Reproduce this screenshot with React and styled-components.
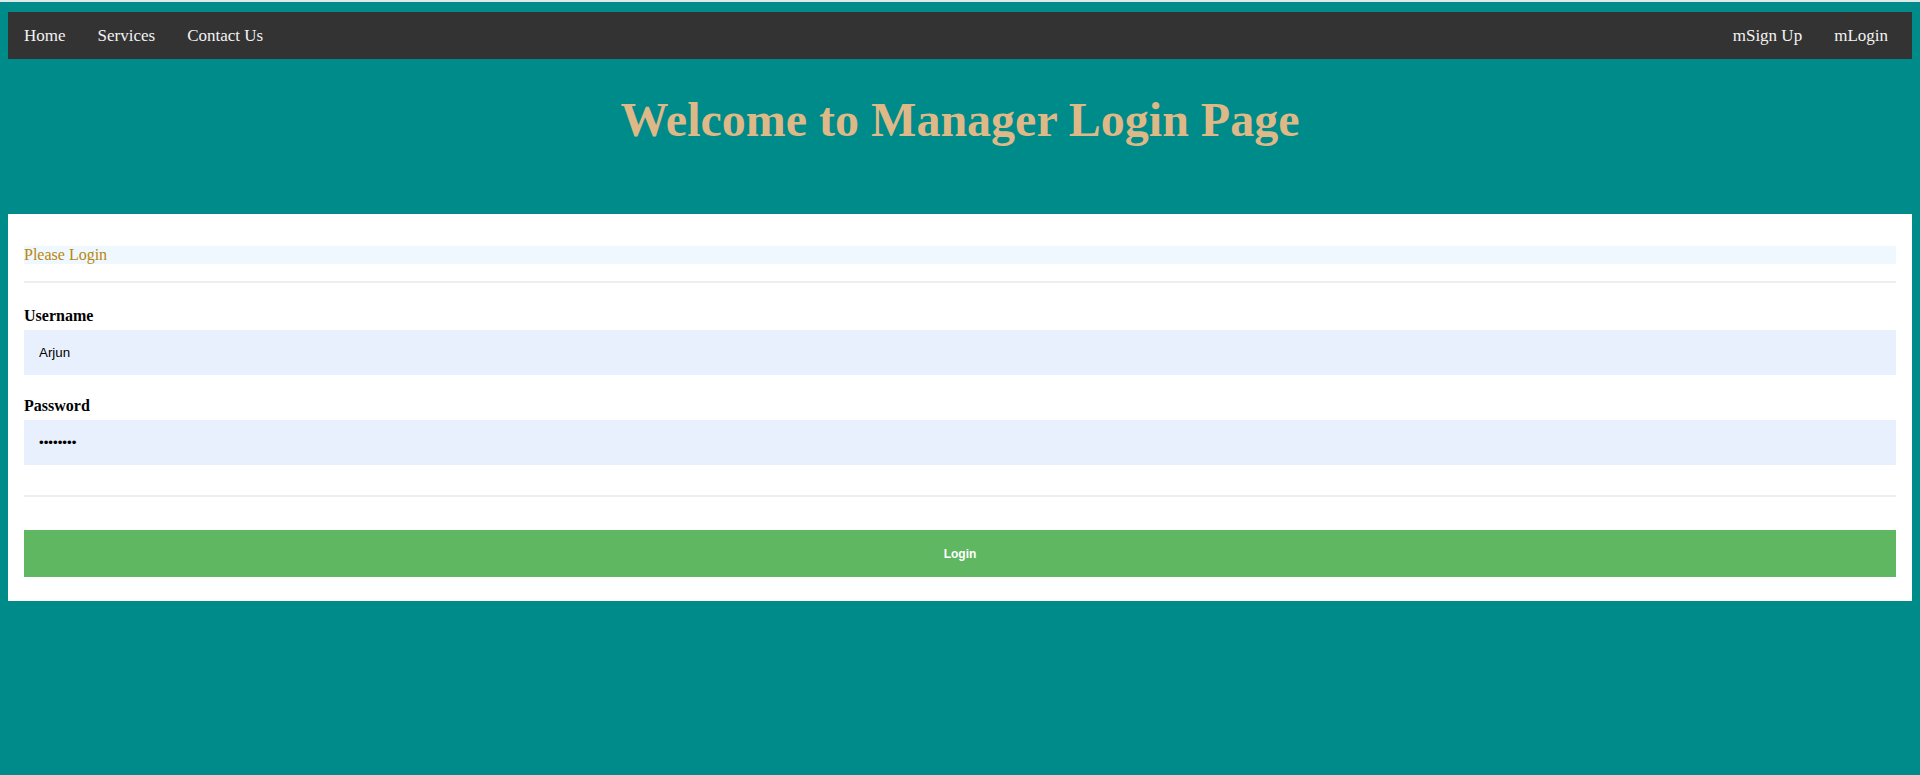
import styled, { createGlobalStyle } from "styled-components";

const GlobalStyle = createGlobalStyle`
    html, body {
        margin: 0;
        background: #008b8b;
        font-family: "Liberation Serif", "Times New Roman", serif;
    }
`

const Page = styled.div`
    padding: 0 8px 8px;
    min-height: 775px;
    box-sizing: border-box;
`

const TopEdge = styled.div`
    height: 2px;
    margin: 0 -8px 10px;
    background: #dfe9e9;
`

const Nav = styled.nav`
    display: flex;
    justify-content: space-between;
    background: #333333;
`

const NavGroup = styled.div`
    display: flex;
    padding-right: ${(p) => p.$endGap || 0}px;
`

const NavLink = styled.a`
    display: block;
    padding: 14px 16px;
    font-size: 17px;
    line-height: 19px;
    color: #f2f2f2;
    text-decoration: none;
    cursor: pointer;
`

const Title = styled.h1`
    margin: 33px 0 67px;
    text-align: center;
    font-size: 48px;
    line-height: 55px;
    font-weight: 700;
    color: #deb887;
`

const Card = styled.div`
    background: #ffffff;
    padding: 32px 16px 24px;
`

const PanelHeading = styled.div`
    background: #f0f8ff;
    color: #b8860b;
    font-size: 16px;
    line-height: 18px;
`

const Divider = styled.hr`
    height: 2px;
    border: none;
    background: #eeeeee;
    margin: ${(p) => p.$top}px 0 ${(p) => p.$bottom}px;
`

const Field = styled.div`
    display: flex;
    flex-direction: column;
    & + & {
        margin-top: 22px;
    }
`

const Label = styled.label`
    font-size: 16px;
    line-height: 18px;
    font-weight: 700;
    color: #000;
    margin-bottom: 5px;
`

const Input = styled.input`
    height: 45px;
    box-sizing: border-box;
    border: none;
    outline: none;
    padding: 0 15px;
    background: #e8f0fe;
    color: #000;
    font-family: "Liberation Sans", Arial, sans-serif;
    font-size: 13.33px;
`

const SubmitButton = styled.button`
    display: block;
    width: 100%;
    height: 47px;
    border: none;
    background: #5fb762;
    color: #ffffff;
    font-family: "Liberation Sans", Arial, sans-serif;
    font-size: 12px;
    font-weight: 700;
    cursor: pointer;
`

function App() {
    return (
        <Page>
            <GlobalStyle />
            <TopEdge />
            <Nav>
                <NavGroup>
                    <NavLink>Home</NavLink>
                    <NavLink>Services</NavLink>
                    <NavLink>Contact Us</NavLink>
                </NavGroup>
                <NavGroup $endGap={8}>
                    <NavLink>mSign Up</NavLink>
                    <NavLink>mLogin</NavLink>
                </NavGroup>
            </Nav>

            <Title>Welcome to Manager Login Page</Title>

            <Card>
                <PanelHeading>Please Login</PanelHeading>
                <Divider $top={17} $bottom={24} />
                <Field>
                    <Label htmlFor="username">Username</Label>
                    <Input id="username" type="text" defaultValue="Arjun" />
                </Field>
                <Field>
                    <Label htmlFor="password">Password</Label>
                    <Input id="password" type="password" defaultValue="12345678" />
                </Field>
                <Divider $top={30} $bottom={33} />
                <SubmitButton>Login</SubmitButton>
            </Card>
        </Page>
    );
}

export default App;
